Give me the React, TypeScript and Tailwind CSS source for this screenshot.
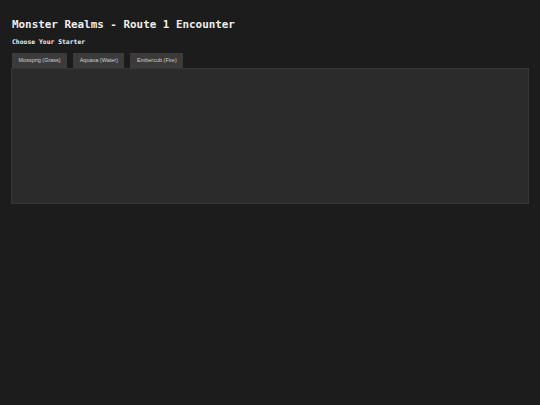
import React, { useState } from 'react';

const starters = ['Mossprig (Grass)', 'Aquava (Water)', 'Embercub (Fire)'];

export default function App() {
    const [selected, setSelected] = useState<number | null>(null);

    return (
        <div className="min-h-[405px] w-full bg-[#1c1c1c] px-[11px] pt-[18px] text-[#eeeeee]">
            <h1 className="pl-px font-['DejaVu_Sans_Mono',monospace] text-[10.9px] font-bold leading-[14px]">
                Monster Realms - Route 1 Encounter
            </h1>
            <h2 className="mt-[6px] pl-px font-['DejaVu_Sans_Mono',monospace] text-[6.4px] font-bold leading-[9px]">
                Choose Your Starter
            </h2>

            {/* Starter tabs */}
            <div className="mt-[6px] flex gap-[6px] pl-px">
                {starters.map((name, i) => (
                    <button
                        key={name}
                        onClick={() => setSelected(i)}
                        className={`h-[15px] px-[6.5px] font-['Liberation_Sans',Arial,sans-serif] text-[5.5px] text-[#cfcfcf] ${
                            selected === i ? 'bg-[#4a4a4a]' : 'bg-[#3b3b3b]'
                        }`}
                    >
                        {name}
                    </button>
                ))}
            </div>

            {/* Encounter panel */}
            <div className="h-[136px] w-[518px] border border-[#373737] bg-[#2b2b2b]" />
        </div>
    );
}
